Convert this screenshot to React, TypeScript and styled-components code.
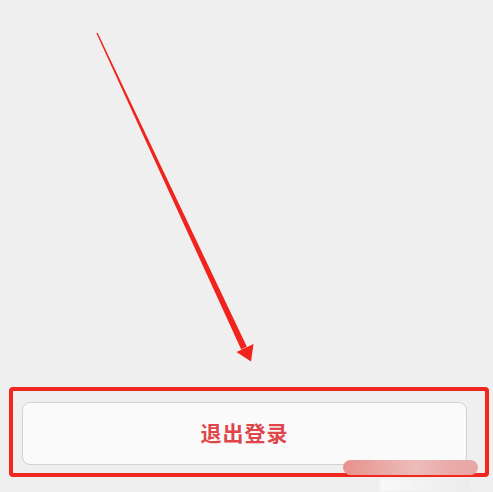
import React from "react";
import styled, { createGlobalStyle } from "styled-components";

const Global = createGlobalStyle`
  html, body { margin: 0; padding: 0; background: #efefef; }
  body { font-family: "Noto Sans CJK SC", "Noto Sans", sans-serif; }
`;

const Page = styled.div`
  position: relative;
  width: 493px;
  height: 492px;
  background: #efefef;
  overflow: hidden;
  display: flex;
  flex-direction: column;
`;

const Canvas = styled.div`
  height: 387px;
  flex: none;
`;

const Highlight = styled.div`
  margin-left: 9px;
  width: 480px;
  height: 90px;
  box-sizing: border-box;
  border: 4px solid #f2261c;
  border-radius: 4px;
  padding: 11px 18px 8px 9px;
  display: flex;
`;

const LogoutButton = styled.button`
  flex: 1;
  box-sizing: border-box;
  height: 63px;
  background: #fafafa;
  border: 1px solid #d2d2d2;
  border-radius: 8px;
  display: flex;
  align-items: center;
  justify-content: center;
  color: #e0454a;
  font-family: "Noto Sans CJK SC", sans-serif;
  font-weight: 700;
  font-size: 21px;
  letter-spacing: 1px;
  padding: 0 0 3px 0;
`;

const Watermark = styled.div`
  position: absolute;
  left: 343px;
  top: 460px;
  width: 135px;
  height: 15px;
  border-radius: 8px;
  background: linear-gradient(90deg, #e8918d 0%, #eaa9a6 30%, #edbdbb 55%, #e9aaa8 80%, #e8a7a5 100%);
  filter: blur(0.6px);
`;

const Ghost = styled.div`
  position: absolute;
  left: 380px;
  top: 479px;
  width: 90px;
  height: 12px;
  background: linear-gradient(90deg, rgba(255,255,255,0.6), rgba(230,230,230,0.4));
  filter: blur(1px);
`;

export default function App() {
  return (
    <>
      <Global />
      <Page>
        <Canvas>
          <svg width="493" height="387" viewBox="0 0 493 387">
            <polygon
              points="97.6,32.7 96.4,33.3 241.2,349.4 246.8,346.6"
              fill="#f0241c"
            />
            <polygon
              points="236.5,352 251,361.5 253.5,344"
              fill="#f0241c"
            />
          </svg>
        </Canvas>
        <Highlight>
          <LogoutButton>退出登录</LogoutButton>
        </Highlight>
        <Watermark />
        <Ghost />
      </Page>
    </>
  );
}
